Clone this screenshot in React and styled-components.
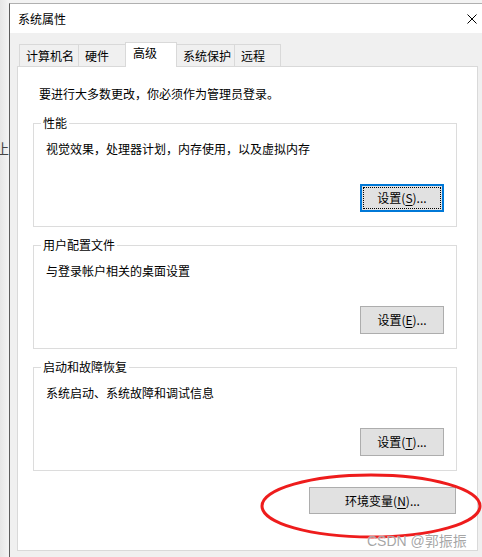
import React from 'react';
import styled, { createGlobalStyle } from 'styled-components';

const GlobalStyle = createGlobalStyle`
    html, body {
        margin: 0;
        padding: 0;
    }
    body {
        font-family: "Noto Sans CJK SC", "Microsoft YaHei", sans-serif;
        font-size: 12px;
        color: #000;
    }
`;

const Screen = styled.div`
    position: relative;
    display: flex;
    width: 482px;
    height: 557px;
    overflow: hidden;
    background: #f3f3f3;
`;

// the window behind the dialog, only a sliver shows
const BackStrip = styled.div`
    width: 9px;
    flex-shrink: 0;
    overflow: hidden;
    padding-top: 139px;
    background: linear-gradient(to right, #e6e6e6, #f4f4f4);
`;

const BackGlyph = styled.span`
    display: block;
    margin-left: -5px;
    font-size: 14px;
    line-height: 18px;
    color: #444;
`;

const Dialog = styled.div`
    flex: 1;
    display: flex;
    flex-direction: column;
    margin-top: 3px;
    border-left: 1px solid #5c5c5c;
    border-top: 1px solid #b0b0b0;
    background: #f0f0f0;
`;

const TitleBar = styled.div`
    height: 29px;
    flex-shrink: 0;
    display: flex;
    align-items: center;
    justify-content: space-between;
    padding-left: 8px;
    background: #fff;
`;

const Title = styled.span`
    line-height: 16px;
`;

const CloseIcon = styled.svg`
    margin-right: 5px;
`;

const Body = styled.div`
    flex: 1;
    display: flex;
    flex-direction: column;
    padding: 9px 4px 6px 7px;
`;

const TabRow = styled.div`
    display: flex;
    align-items: flex-end;
    padding-left: 2px;
    position: relative;
    z-index: 1;
`;

const Tab = styled.div`
    box-sizing: border-box;
    width: ${props => props.w}px;
    height: ${props => (props.active ? 25 : 22)}px;
    margin-left: ${props => (props.first ? 0 : -1)}px;
    margin-bottom: ${props => (props.active ? -1 : 0)}px;
    padding: ${props => (props.active ? '2px 0 0 7px' : '3px 0 0 6px')};
    border: 1px solid #d9d9d9;
    border-bottom: none;
    background: ${props => (props.active ? '#fff' : '#f0f0f0')};
    line-height: 16px;
    white-space: nowrap;
    position: relative;
    z-index: ${props => (props.active ? 2 : 1)};
`;

const Panel = styled.div`
    flex: 1;
    display: flex;
    flex-direction: column;
    border: 1px solid #d9d9d9;
    background: #fff;
`;

const Intro = styled.p`
    margin: 19px 0 0 21px;
    line-height: 16px;
`;

const Group = styled.fieldset`
    margin: ${props => (props.first ? 13 : 10)}px 20px 0 15px;
    padding: 0;
    border: 1px solid #dcdcdc;
    min-width: 0;
`;

const GroupTitle = styled.legend`
    margin-left: 7px;
    padding: 0 2px;
    line-height: 16px;
    font-size: 12px;
`;

const GroupText = styled.div`
    padding: 10px 0 0 12px;
    line-height: 16px;
`;

const ButtonRow = styled.div`
    display: flex;
    justify-content: flex-end;
    margin-top: ${props => props.top}px;
    padding-right: ${props => props.right}px;
    padding-bottom: ${props => props.bottom || 0}px;
`;

const Button = styled.div`
    box-sizing: border-box;
    position: relative;
    display: flex;
    align-items: center;
    justify-content: center;
    width: ${props => props.w}px;
    height: ${props => props.h}px;
    border: 1px solid ${props => (props.focused ? '#0078d7' : '#adadad')};
    box-shadow: ${props => (props.focused ? 'inset 0 0 0 1px #0078d7' : 'none')};
    background: #e1e1e1;
    line-height: 16px;
    white-space: nowrap;

    u {
        text-underline-offset: 2px;
    }
`;

const FocusRing = styled.span`
    position: absolute;
    inset: 2px;
    border: 1px dotted #000;
`;

const Ellipse = styled.svg`
    position: absolute;
    left: 259px;
    top: 471px;
    pointer-events: none;
`;

const Watermark = styled.span`
    position: absolute;
    left: 367px;
    top: 532px;
    font-family: "Liberation Sans", "Noto Sans CJK SC", sans-serif;
    font-size: 14px;
    line-height: 18px;
    color: rgba(150, 150, 150, 0.85);
    text-shadow: 0 0 1px #fff;
    white-space: nowrap;
`;

const tabs = [
    { label: '计算机名', w: 60 },
    { label: '硬件', w: 48 },
    { label: '高级', w: 52, active: true },
    { label: '系统保护', w: 59 },
    { label: '远程', w: 47 },
];

const groups = [
    { title: '性能', text: '视觉效果，处理器计划，内存使用，以及虚拟内存', key: 'S', focused: true },
    { title: '用户配置文件', text: '与登录帐户相关的桌面设置', key: 'E' },
    { title: '启动和故障恢复', text: '系统启动、系统故障和调试信息', key: 'T' },
];

const App = () => (
    <Screen>
        <GlobalStyle />
        <BackStrip>
            <BackGlyph>止</BackGlyph>
        </BackStrip>
        <Dialog>
            <TitleBar>
                <Title>系统属性</Title>
                <CloseIcon width="10" height="10" viewBox="0 0 10 10">
                    <path d="M0.5 0.5 L9.5 9.5 M9.5 0.5 L0.5 9.5" stroke="#000" strokeWidth="1" fill="none" />
                </CloseIcon>
            </TitleBar>
            <Body>
                <TabRow>
                    {tabs.map((t, i) => (
                        <Tab key={t.label} w={t.w} active={t.active} first={i === 0}>
                            {t.label}
                        </Tab>
                    ))}
                </TabRow>
                <Panel>
                    <Intro>要进行大多数更改，你必须作为管理员登录。</Intro>
                    {groups.map((g, i) => (
                        <Group key={g.title} first={i === 0}>
                            <GroupTitle>{g.title}</GroupTitle>
                            <GroupText>{g.text}</GroupText>
                            <ButtonRow top={27} right={12} bottom={14}>
                                <Button w={84} h={28} focused={g.focused}>
                                    设置(<u>{g.key}</u>)...
                                    {g.focused ? <FocusRing /> : null}
                                </Button>
                            </ButtonRow>
                        </Group>
                    ))}
                    <ButtonRow top={16} right={21}>
                        <Button w={147} h={27}>
                            环境变量(<u>N</u>)...
                        </Button>
                    </ButtonRow>
                </Panel>
            </Body>
        </Dialog>
        <Ellipse width="224" height="70" viewBox="0 0 224 70">
            <ellipse cx="112" cy="35" rx="109" ry="31" fill="none" stroke="#ee1c1c" strokeWidth="3" />
        </Ellipse>
        <Watermark>CSDN @郭振振</Watermark>
    </Screen>
);

export default App;
